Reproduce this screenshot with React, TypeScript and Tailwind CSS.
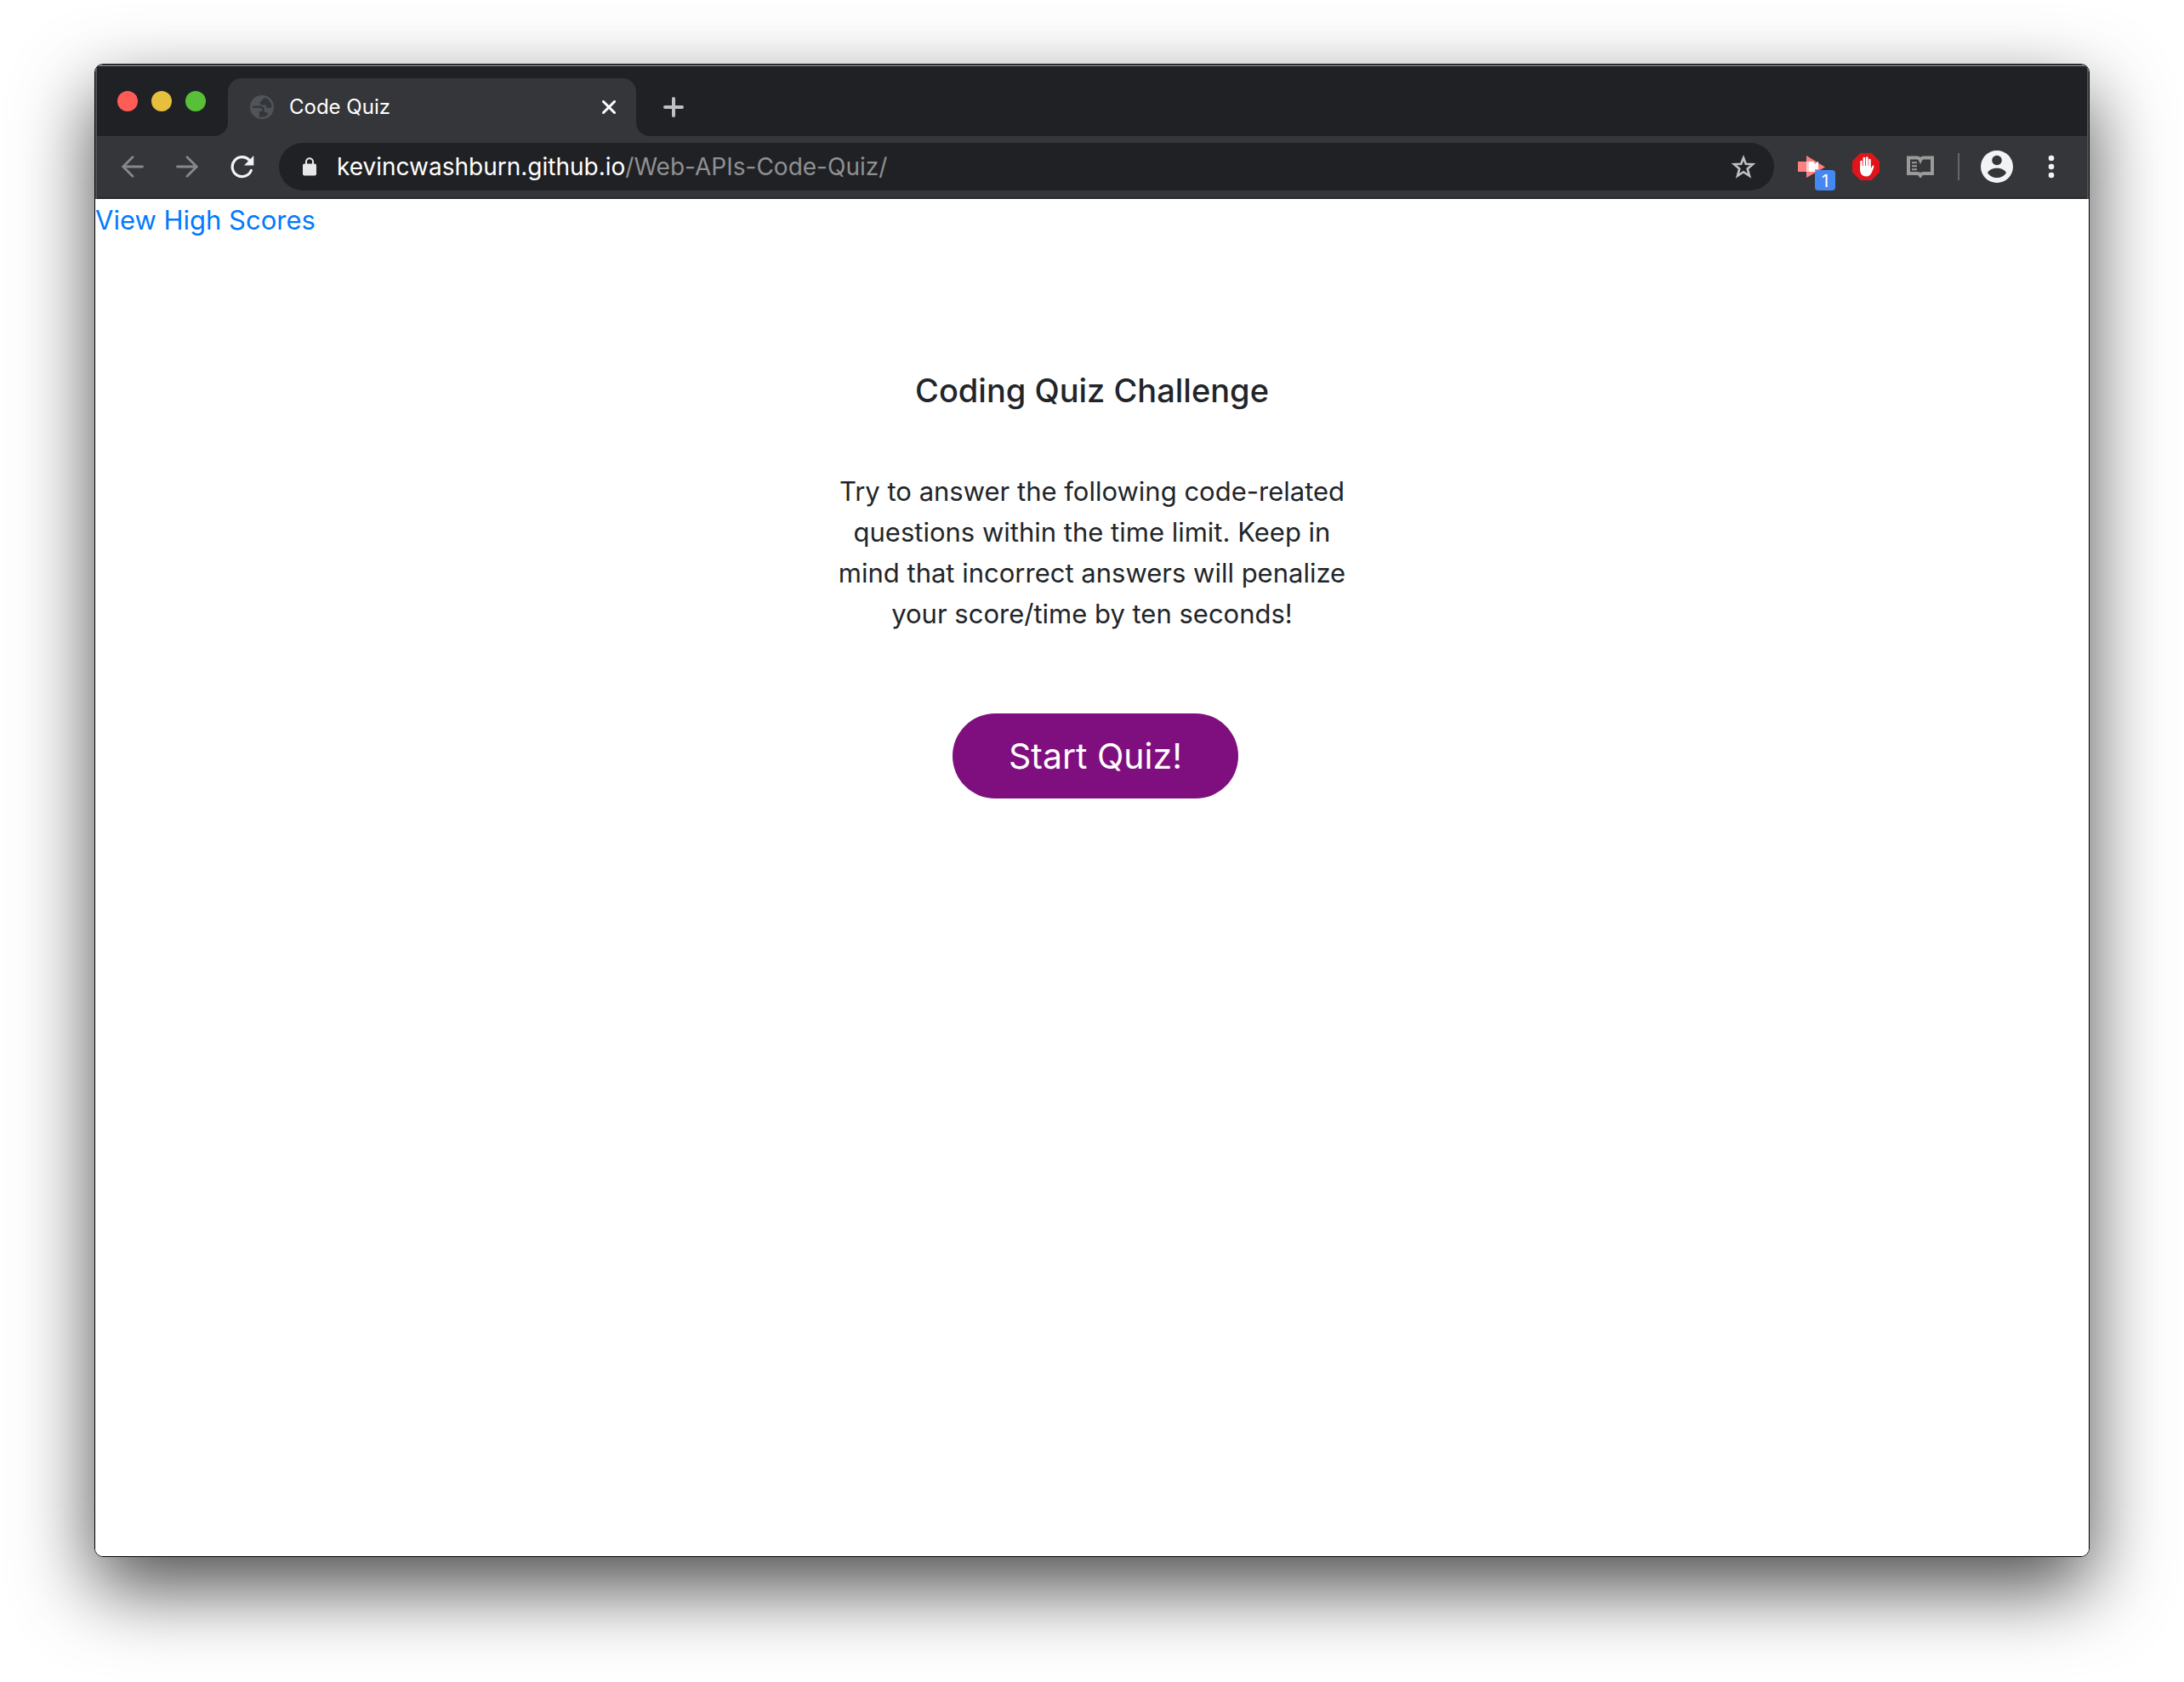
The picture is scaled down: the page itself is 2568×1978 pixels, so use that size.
import React from "react";

function TrafficLight({ label, className }: { label: string; className: string }) {
  return <button type="button" aria-label={label} className={`size-6 rounded-full ${className}`} />;
}

function GlobeIcon() {
  return (
    <svg viewBox="0 0 28 28" className="size-7 shrink-0" aria-hidden="true">
      <circle cx="14" cy="14" r="12.700" fill="none" stroke="#50545a" strokeWidth="2.600" />
      <path
        d="M1.500 10.500C3 5 8 1 14 1.300l3.500 1.700c-2.500.8-3.300 2-3.300 3.700-1.800.2-2.600 1.200-2.600 2.600 0 1.300.8 2.200 2.400 2.200h4.500c-.2 2.300.8 3.600 3 3.600 1.600 0 3-.3 4.500-1.400.3 4-1.400 7.300-3.500 8.600h-2.200v-2.600h-4c.3-3-1.500-4.900-4.300-4.900H2z"
        fill="#50545a"
      />
      <path d="M2 14.800h10c1.700 0 2.500 1.200 2.500 3v1.700h-3.300v4.500l2.800 2.700C7 27 1.500 22 1.300 14.800z" fill="#50545a" />
      <path
        d="M3 13.600h8.500c2.600 0 4.200 1.600 4.200 4.200 0 1-.3 1.700-1 2.300h-2.900v4.500c3 .5 5.500-.2 7.700-1.700"
        fill="none"
        stroke="#35363a"
        strokeWidth="2.200"
      />
      <path d="M18 3.200c3.800 1.500 6.300 4.200 7 8.300-1 1.300-2.300 1.900-3.600 1.900-1.700 0-2.600-1.100-2.400-2.900h-3.600c-1.200 0-1.800-.5-1.800-1.500s.6-1.500 1.900-1.500c0-2 .6-3.400 2.500-4.300z" fill="#35363a" />
    </svg>
  );
}

function LockIcon() {
  return (
    <svg viewBox="0 0 16 22" className="h-[22px] w-4 shrink-0" aria-hidden="true">
      <path d="M4 9V5.200a4 4 0 0 1 8 0V9" fill="none" stroke="#e8e8e9" strokeWidth="2" />
      <rect x="0" y="7.500" width="16" height="14" rx="2" fill="#e8e8e9" />
    </svg>
  );
}

function ArrowIcon({ flip = false }: { flip?: boolean }) {
  return (
    <svg viewBox="0 0 26 26" className={flip ? "size-[26px] rotate-180" : "size-[26px]"} aria-hidden="true">
      <path d="M24.500 13H2M13 1.800 1.800 13 13 24.200" fill="none" stroke="#87888a" strokeWidth="2.800" strokeLinecap="round" />
    </svg>
  );
}

function ReloadIcon() {
  return (
    <svg viewBox="0 0 28 28" className="size-7" aria-hidden="true">
      <path d="M24.300 18.500A11.500 11.500 0 1 1 22 6.200" fill="none" stroke="#f1f3f4" strokeWidth="3.200" strokeLinecap="round" />
      <path d="M27.300 1v11.500H16z" fill="#f1f3f4" />
    </svg>
  );
}

function StarIcon() {
  return (
    <svg viewBox="0 0 30 30" className="size-[30px]" aria-hidden="true">
      <path
        d="M15 4.500 17.800 11.700 26 12.200 19.700 17.400 22 25.800 15 21.200 8 25.800 10.300 17.400 4 12.200 12.200 11.700z"
        fill="none"
        stroke="#bdc1c6"
        strokeWidth="2.600"
      />
    </svg>
  );
}

function RecorderIcon() {
  return (
    <svg viewBox="0 0 32 28" className="h-7 w-8" aria-hidden="true">
      <path d="M0 8h10V1l22 13.500L10 27v-7H0z" fill="#ff8080" />
      <path d="M10 8h4v12h-4z" fill="#ffd0d0" />
      <path d="M13 8h5.500l1.500 3 3.500-3H24v9h-4v3h-7z" fill="#ffffff" />
    </svg>
  );
}

function HandIcon() {
  return (
    <svg viewBox="0 0 32 32" className="size-8" aria-hidden="true">
      <path d="M9.400 0h13.200L32 9.400v13.200L22.600 32H9.400L0 22.600V9.400z" fill="#e1131b" />
      <path d="M10.500 20V10M13.900 16V6M17.300 16V5.500M20.500 17V8" stroke="#ffffff" strokeWidth="2.600" strokeLinecap="round" />
      <path
        d="M9.200 15h12.600v3.600l1.500-3.200c.6-1.200 2.300-1 2.100.3-.5 2.500-1.800 5.300-2.800 7.600-1.300 2.700-3.200 4.200-6.100 4.200-4.300 0-7.300-2.900-7.300-7.500z"
        fill="#ffffff"
      />
    </svg>
  );
}

function BookIcon() {
  return (
    <svg viewBox="0 0 32 26" className="h-[26px] w-8" aria-hidden="true">
      <path
        d="M2 2.500h10c2 0 3.200 1 4 2.800.8-1.800 2-2.800 4-2.800h10v18.500H20c-2 0-3.200.6-4 2.300-.8-1.700-2-2.300-4-2.300H2z"
        fill="none"
        stroke="#9a9a99"
        strokeWidth="4"
      />
      <path d="M6 8.200h6M6 12.200h6M6 16.200h6" stroke="#9a9a99" strokeWidth="2" />
    </svg>
  );
}

function ProfileIcon() {
  return (
    <svg viewBox="0 0 38 38" className="size-[38px]" aria-hidden="true">
      <circle cx="19" cy="19" r="19" fill="#f1f3f4" />
      <circle cx="19" cy="11.500" r="5.800" fill="#35363a" />
      <path d="M8 26.200c2-3.700 6.500-5.400 11-5.400s9 1.700 11 5.400c-2.500 3.600-6.500 5.800-11 5.800s-8.500-2.200-11-5.800z" fill="#35363a" />
    </svg>
  );
}

function DotsIcon() {
  return (
    <svg viewBox="0 0 8 28" className="h-7 w-2" aria-hidden="true">
      <circle cx="4" cy="4" r="3.300" fill="#f1f3f4" />
      <circle cx="4" cy="14" r="3.300" fill="#f1f3f4" />
      <circle cx="4" cy="24" r="3.300" fill="#f1f3f4" />
    </svg>
  );
}

function TabStrip() {
  return (
    <div className="flex h-[82px] items-end bg-[#202124]">
      <div className="h-full w-[154px] shrink-0 bg-[linear-gradient(to_bottom,#202124_50%,#35363a_50%)]">
        <div className="flex h-full items-center gap-4 rounded-br-2xl bg-[#202124] pl-6">
          <TrafficLight label="Close window" className="bg-[#ff5c58]" />
          <TrafficLight label="Minimize window" className="bg-[#e6bf3d]" />
          <TrafficLight label="Zoom window" className="bg-[#58c038]" />
        </div>
      </div>
      <div className="flex h-[68px] w-[480px] items-center rounded-t-2xl bg-[#35363a] pr-6 pl-[26px]">
        <GlobeIcon />
        <span className="ml-[18px] grow text-2xl text-white">Code Quiz</span>
        <button type="button" aria-label="Close tab">
          <svg viewBox="0 0 16 16" className="size-4" aria-hidden="true">
            <path d="M1.500 1.500l13 13M14.500 1.500l-13 13" stroke="#ffffff" strokeWidth="3" strokeLinecap="round" />
          </svg>
        </button>
      </div>
      <div className="h-4 w-4 bg-[#35363a]">
        <div className="size-full rounded-bl-2xl bg-[#202124]" />
      </div>
      <button type="button" aria-label="New tab" className="mb-[22px] ml-4">
        <svg viewBox="0 0 24 24" className="size-6" aria-hidden="true">
          <path d="M12 2v20M2 12h20" stroke="#bdc1c6" strokeWidth="4" strokeLinecap="round" />
        </svg>
      </button>
    </div>
  );
}

function Toolbar() {
  return (
    <div className="flex h-[74px] items-center border-b-2 border-[#28292c] bg-[#35363a] pr-[38px] pl-[29px]">
      <nav aria-label="History" className="flex items-center gap-[38px]">
        <button type="button" aria-label="Back">
          <ArrowIcon />
        </button>
        <button type="button" aria-label="Forward">
          <ArrowIcon flip />
        </button>
        <button type="button" aria-label="Reload">
          <ReloadIcon />
        </button>
      </nav>
      <div className="ml-[29px] flex h-14 grow items-center rounded-full bg-[#202124] pr-[21px] pl-7">
        <LockIcon />
        <a href="#" className="ml-6 grow text-[28px] leading-9 text-[#8f9092]">
          <span className="text-white">kevincwashburn.github.io</span>/Web-APIs-Code-Quiz/
        </a>
        <button type="button" aria-label="Bookmark this page">
          <StarIcon />
        </button>
      </div>
      <div className="ml-7 flex items-center gap-8">
        <button type="button" aria-label="Recorder extension" className="relative">
          <RecorderIcon />
          <span className="absolute top-[18px] left-5 size-6 rounded bg-[#4688f1] text-center text-xl leading-[26px] text-white">1</span>
        </button>
        <button type="button" aria-label="Ad blocker">
          <HandIcon />
        </button>
        <button type="button" aria-label="Reader">
          <BookIcon />
        </button>
      </div>
      <div className="ml-7 h-8 w-[2px] bg-[#66676b]" />
      <button type="button" aria-label="Profile" className="ml-[25px]">
        <ProfileIcon />
      </button>
      <button type="button" aria-label="Menu" className="ml-[41px]">
        <DotsIcon />
      </button>
    </div>
  );
}

function QuizPage() {
  return (
    <div className="grow bg-white pt-px text-[31px] leading-[48px] text-[#212529]">
      <a href="#scores" className="block w-fit text-[#007bff]">
        View High Scores
      </a>
      <main className="flex flex-col items-center pt-[152px] text-center">
        <h1 className="text-[38px] leading-[48px] font-medium">Coding Quiz Challenge</h1>
        <p className="mt-[71px] max-w-[610px]">
          Try to answer the following code-related questions within the time limit. Keep in mind that incorrect answers will
          penalize your score/time by ten seconds!
        </p>
        <button type="button" className="mt-[93px] ml-2 h-[100px] rounded-full bg-[#7f0f7e] px-[66px] text-[41px] text-white">
          Start Quiz!
        </button>
      </main>
    </div>
  );
}

export default function App() {
  return (
    <div className="flex min-h-screen bg-white px-[111px] pt-[75px] pb-[147px] font-[Inter,sans-serif]">
      <div className="flex grow flex-col overflow-hidden rounded-[10px] border border-black shadow-[0_36px_90px_rgba(0,0,0,0.7)]">
        <header className="border-x-2 border-t-2 border-x-[#515255] border-t-[#6c706e]">
          <TabStrip />
          <Toolbar />
        </header>
        <QuizPage />
      </div>
    </div>
  );
}
